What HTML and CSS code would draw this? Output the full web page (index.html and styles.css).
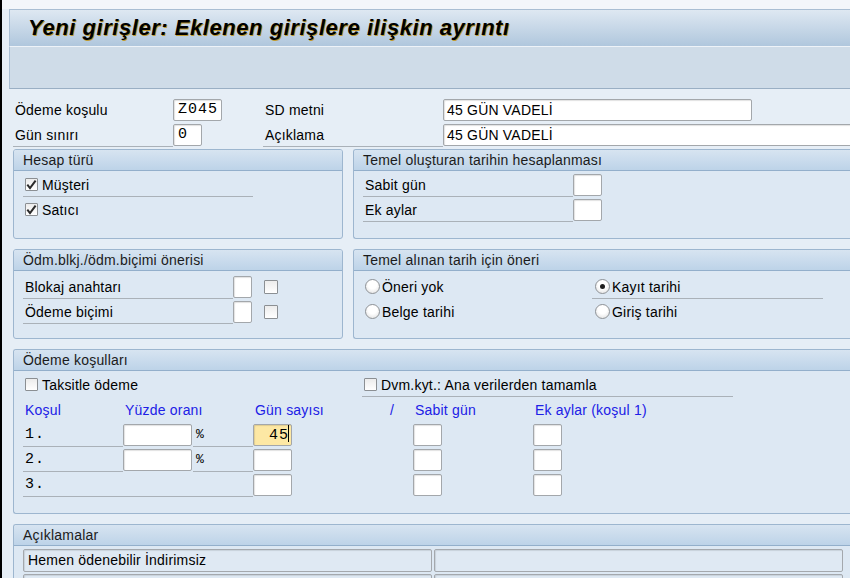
FILE: index.html
```html
<!DOCTYPE html>
<html lang="tr">
<head>
<meta charset="utf-8">
<title>Yeni girişler</title>
<link rel="stylesheet" href="styles.css">
</head>
<body>
<div class="topstrip"></div>
<div class="titlebar"><h1>Yeni girişler: Eklenen girişlere ilişkin ayrıntı</h1></div>
<div class="toolbar"></div>
<div class="content">
  <div class="frow">
    <span class="lbl w160">Ödeme koşulu</span>
    <span class="inp mono w49">Z045</span>
    <span class="lbl w180 gap41">SD metni</span>
    <span class="inp w309">45 GÜN VADELİ</span>
  </div>
  <div class="frow">
    <span class="lbl ul w160">Gün sınırı</span>
    <span class="inp mono w29">0</span>
    <span class="lbl ul w180 gap61">Açıklama</span>
    <span class="inp w420">45 GÜN VADELİ</span>
  </div>

  <div class="boxrow">
    <section class="box bl">
      <div class="bhead">Hesap türü</div>
      <div class="bbody pt3">
        <div class="brow ul w230"><span class="cb on"><svg viewBox="0 0 13 13" width="13" height="13"><path d="M2.3 6.6 L5 10 L10.6 2.6" fill="none" stroke="#2b2b2b" stroke-width="2"/></svg></span>Müşteri</div>
        <div class="brow w230"><span class="cb on"><svg viewBox="0 0 13 13" width="13" height="13"><path d="M2.3 6.6 L5 10 L10.6 2.6" fill="none" stroke="#2b2b2b" stroke-width="2"/></svg></span>Satıcı</div>
      </div>
    </section>
    <section class="box br">
      <div class="bhead">Temel oluşturan tarihin hesaplanması</div>
      <div class="bbody pt3">
        <div class="brow"><span class="lbl ul w210">Sabit gün</span><span class="inp w29"></span></div>
        <div class="brow"><span class="lbl ul w210">Ek aylar</span><span class="inp w29"></span></div>
      </div>
    </section>
  </div>

  <div class="boxrow">
    <section class="box bl">
      <div class="bhead">Ödm.blkj./ödm.biçimi önerisi</div>
      <div class="bbody pt5">
        <div class="brow"><span class="lbl ul w210">Blokaj anahtarı</span><span class="inp w19"></span><span class="cb sq"></span></div>
        <div class="brow"><span class="lbl ul w210">Ödeme biçimi</span><span class="inp w19"></span><span class="cb sq"></span></div>
      </div>
    </section>
    <section class="box br">
      <div class="bhead">Temel alınan tarih için öneri</div>
      <div class="bbody pt5">
        <div class="brow">
          <span class="rcell w229"><span class="rb"></span>Öneri yok</span>
          <span class="rcell ul w231 r2"><span class="rb on"></span>Kayıt tarihi</span>
        </div>
        <div class="brow">
          <span class="rcell w229"><span class="rb"></span>Belge tarihi</span>
          <span class="rcell w231 r2"><span class="rb"></span>Giriş tarihi</span>
        </div>
      </div>
    </section>
  </div>

  <section class="box full terms">
    <div class="bhead">Ödeme koşulları</div>
    <div class="bbody pt3">
      <div class="brow">
        <span class="ccell w339"><span class="cb"></span>Taksitle ödeme</span>
        <span class="ccell ul w371"><span class="cb"></span>Dvm.kyt.: Ana verilerden tamamla</span>
      </div>
      <div class="brow colhead">
        <span class="w100">Koşul</span>
        <span class="w130">Yüzde oranı</span>
        <span class="w135">Gün sayısı</span>
        <span class="w25">/</span>
        <span class="w120">Sabit gün</span>
        <span>Ek aylar (koşul 1)</span>
      </div>
      <div class="brow">
        <span class="lbl ul mono w100">1.</span>
        <span class="inp w69"></span>
        <span class="lbl ul mono pct w60">%</span>
        <span class="inp mono w39 focus">45<i class="caret"></i></span>
        <span class="inp w29 m121"></span>
        <span class="inp w29 m91"></span>
      </div>
      <div class="brow">
        <span class="lbl ul mono w100">2.</span>
        <span class="inp w69"></span>
        <span class="lbl ul mono pct w60">%</span>
        <span class="inp w39"></span>
        <span class="inp w29 m121"></span>
        <span class="inp w29 m91"></span>
      </div>
      <div class="brow">
        <span class="lbl ul mono w230">3.</span>
        <span class="inp w39"></span>
        <span class="inp w29 m121"></span>
        <span class="inp w29 m91"></span>
      </div>
    </div>
  </section>

  <section class="box full notes">
    <div class="bhead">Açıklamalar</div>
    <div class="bbody pt3">
      <div class="drow"><span class="disp">Hemen ödenebilir İndirimsiz</span><span class="disp"></span></div>
      <div class="drow"><span class="disp"></span><span class="disp"></span></div>
    </div>
  </section>
</div>
</body>
</html>
```

FILE: styles.css
```css
* { box-sizing: border-box; }
html, body { margin: 0; overflow: hidden; }
body {
  width: 850px;
  height: 578px;
  background: #e6eef6;
  border-left: 2px solid #000;
  font-family: "Liberation Sans", Arial, sans-serif;
  font-size: 14px;
  letter-spacing: 0.2px;
  color: #000;
}
.topstrip { height: 9px; background: #f3f6fa; }
.titlebar {
  margin-left: 7px;
  height: 37px;
  border-top: 1px solid #a9bed3;
  border-left: 1px solid #a9bed3;
  background: linear-gradient(#dee8f2, #b0c7dd);
  padding-left: 18px;
}
.titlebar h1 {
  margin: 0;
  font-family: "Liberation Sans", Arial, sans-serif;
  font-style: italic;
  font-weight: bold;
  font-size: 22px;
  letter-spacing: 0.55px;
  line-height: 35px;
  color: #000;
  white-space: nowrap;
  text-shadow: 1px 1px 0 #c09a30;
}
.toolbar {
  margin-left: 7px;
  height: 43px;
  border-top: 1px solid #eef3f8;
  border-left: 1px solid #a9bed3;
  border-bottom: 1px solid #9aafc4;
  background: #cfdce8;
}
.content { padding: 10px 0 0 11px; width: 880px; }

.frow { display: flex; height: 23px; margin-bottom: 2px; }
.lbl {
  display: block;
  flex: none;
  height: 23px;
  line-height: 22px;
  padding-left: 2px;
  white-space: nowrap;
}
.ul { border-bottom: 1px solid #aab1b8; }
.inp {
  display: block;
  flex: none;
  height: 22px;
  line-height: 20px;
  padding-left: 3px;
  background: #fff;
  border: 1px solid #a3a7ab;
  border-radius: 2px;
  box-shadow: inset 1px 1px 1px rgba(0,0,0,0.12);
  white-space: nowrap;
  overflow: hidden;
}
.mono {
  font-family: "Liberation Mono", "Courier New", monospace;
  font-size: 15px;
  letter-spacing: 1px;
}
.inp.mono { padding-left: 4px; }

.w19 { width: 19px; } .w25 { width: 25px; } .w29 { width: 29px; } .w39 { width: 39px; }
.w49 { width: 49px; } .w60 { width: 60px; } .w69 { width: 69px; } .w100 { width: 100px; }
.w120 { width: 120px; } .w130 { width: 130px; } .w135 { width: 135px; } .w160 { width: 160px; }
.w180 { width: 180px; } .w210 { width: 210px; } .w229 { width: 229px; } .w230 { width: 230px; }
.w231 { width: 231px; } .w309 { width: 309px; } .w339 { width: 339px; } .w371 { width: 371px; }
.w420 { width: 420px; }
.gap41 { margin-left: 41px; } .gap61 { margin-left: 61px; }
.m121 { margin-left: 121px; } .m91 { margin-left: 91px; }

.boxrow { display: flex; gap: 10px; margin-top: 2px; margin-bottom: 10px; }
.box {
  flex: none;
  height: 90px;
  background: #dde8f3;
  border: 1px solid #9db6cf;
  border-radius: 3px;
  overflow: hidden;
}
.bl { width: 330px; }
.br { width: 530px; border-right: none; }
.full { width: 860px; border-right: none; }
.terms { height: 165px; margin-bottom: 10px; }
.notes { height: 80px; }
.bhead {
  height: 21px;
  line-height: 20px;
  padding-left: 9px;
  color: #1b1b1b;
  background: linear-gradient(#d7e4f1, #bdd3e8);
  border-bottom: 1px solid #93afcb;
  white-space: nowrap;
}
.bbody { padding-left: 9px; }
.pt3 { padding-top: 3px; }
.pt5 { padding-top: 5px; }
.brow {
  display: flex;
  align-items: flex-start;
  height: 23px;
  line-height: 22px;
  margin-bottom: 2px;
  white-space: nowrap;
}
.brow.w230 { width: 230px; }

.cb {
  flex: none;
  display: inline-block;
  width: 13px;
  height: 13px;
  margin: 4px 4px 0 2px;
  border: 1px solid #8b8f93;
  border-radius: 1px;
  background: linear-gradient(#ececec, #ffffff);
  position: relative;
}
.cb svg { position: absolute; left: -1px; top: -1px; }
.cb.sq { margin: 4px 0 0 12px; width: 14px; height: 14px; }

.rcell, .ccell { display: flex; align-items: flex-start; height: 23px; line-height: 22px; flex: none; }
.rb {
  flex: none;
  width: 15px;
  height: 15px;
  margin: 3px 2px 0 2px;
  border: 1px solid #8e9296;
  border-radius: 50%;
  background: radial-gradient(circle at 50% 35%, #ffffff 40%, #dcdcdc 100%);
  position: relative;
}
.rb.on::after {
  content: "";
  position: absolute;
  left: 4px;
  top: 4px;
  width: 5px;
  height: 5px;
  border-radius: 50%;
  background: #1e1e1e;
}
.r2 .rb { margin-left: 3px; }

.colhead { color: #2020e6; }
.colhead span { display: block; flex: none; padding-left: 2px; }
.pct { font-size: 13px; padding-left: 3px; margin-left: 1px; }

.focus {
  background: #fde8a4;
  text-align: right;
  padding-right: 2px;
  letter-spacing: 1px;
}
.caret {
  display: inline-block;
  width: 1px;
  height: 17px;
  background: #000;
  vertical-align: -3px;
  margin-left: -1px;
}

.drow { display: flex; gap: 2px; margin-bottom: 2px; }
.disp {
  display: block;
  width: 409px;
  height: 23px;
  line-height: 21px;
  padding-left: 4px;
  background: #dfe9f3;
  border: 1px solid #a4a8ad;
  border-radius: 2px;
  box-shadow: inset 1px 1px 1px rgba(0,0,0,0.1);
  white-space: nowrap;
}
```
